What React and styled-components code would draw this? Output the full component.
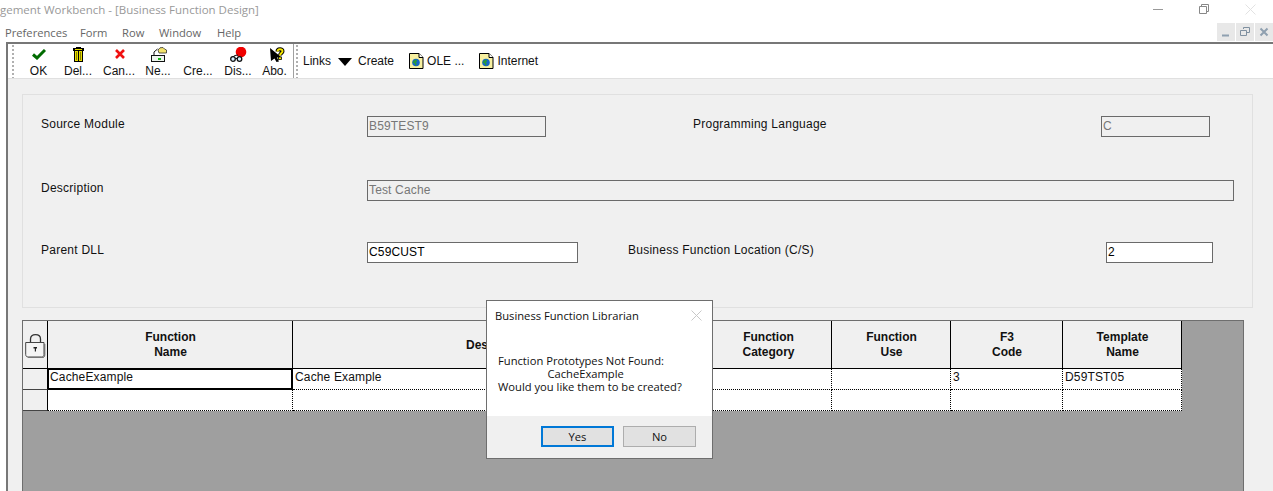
import React from 'react';
import styled, { createGlobalStyle } from 'styled-components';

const GlobalStyle = createGlobalStyle`
  html, body {
    margin: 0;
    padding: 0;
    background: #fff;
    overflow: hidden;
  }
`;

const Screen = styled.div`
  width: 1273px;
  height: 491px;
  overflow: hidden;
  display: flex;
  flex-direction: column;
  background: #fff;
  font-family: "Liberation Sans", Arial, sans-serif;
  font-size: 12px;
  color: #000;
`;

const TitleBar = styled.div`
  height: 22px;
  flex: none;
  display: flex;
  align-items: flex-start;
  font-family: "Open Sans", sans-serif;
  font-size: 11.5px;
  color: #999;
`;

const TitleText = styled.span`
  flex: 1;
  line-height: 20px;
  white-space: nowrap;
`;

const Caption = styled.div`
  width: 46px;
  height: 18px;
  display: flex;
  align-items: center;
  justify-content: center;
`;

const MenuBar = styled.div`
  height: 20px;
  flex: none;
  display: flex;
  align-items: center;
  padding-left: 5px;
  font-family: "Open Sans", sans-serif;
  font-size: 11.2px;
  color: #666;
`;

const MenuItem = styled.span`
  width: ${(p) => p.$w}px;
`;

const MdiButtons = styled.div`
  margin-left: auto;
  display: flex;
  gap: 1px;
`;

const MdiButton = styled.div`
  width: 18px;
  height: 18px;
  background: #e8e8e8;
  display: flex;
  align-items: center;
  justify-content: center;
`;

const Frame = styled.div`
  flex: 1;
  margin-left: 6px;
  border-left: 2px solid #777;
  border-top: 2px solid #777;
  background: #f0f0f0;
  display: flex;
  flex-direction: column;
  min-height: 0;
`;

const Toolbar = styled.div`
  height: 34px;
  flex: none;
  background: #fff;
  border-bottom: 1px solid #e0e0e0;
  display: flex;
  align-items: stretch;
`;

const Gripper = styled.div`
  width: 2px;
  margin: 1px ${(p) => p.$right || 0}px 0 ${(p) => p.$left}px;
  background-image: linear-gradient(#b0b0b0 50%, transparent 50%);
  background-size: 2px 4px;
`;

const ToolSeparator = styled.div`
  width: 1px;
  background: #a0a0a0;
`;

const ToolButton = styled.div`
  width: ${(p) => p.$w}px;
  height: 34px;
  flex: none;
  display: flex;
  flex-direction: column;
  align-items: center;
`;

const ToolIcon = styled.div`
  height: 21px;
  display: flex;
  align-items: center;
  margin-left: ${(p) => p.$shift || 1}px;
`;

const ToolLabel = styled.span`
  line-height: 14px;
  color: #111;
  white-space: nowrap;
`;

const LinksArea = styled.div`
  display: flex;
  align-items: center;
  color: #111;
  margin-left: 5px;
  white-space: nowrap;
`;

const LinkText = styled.span`
  margin: 0 ${(p) => p.$right || 0}px 0 ${(p) => p.$left || 0}px;
`;

const ArrowSvg = styled.svg`
  margin-top: 2px;
`;

const Content = styled.div`
  flex: 1;
  padding: 15px 0 0 14px;
  display: flex;
  flex-direction: column;
  min-height: 0;
`;

const Panel = styled.div`
  width: 1231px;
  height: 214px;
  flex: none;
  box-sizing: border-box;
  border: 1px solid #e0e0e0;
  padding: 21px 0 0 18px;
  display: flex;
  flex-direction: column;
`;

const FormRow = styled.div`
  display: grid;
  grid-template-columns: ${(p) => p.$cols};
  margin-top: ${(p) => p.$top || 0}px;
`;

const Label = styled.span`
  padding-top: 1px;
  line-height: 14px;
  letter-spacing: 0.25px;
  color: #111;
  white-space: nowrap;
`;

const Field = styled.div`
  height: 21px;
  box-sizing: border-box;
  border: 1px solid #6a6a6a;
  padding: 2px 0 0 1px;
  line-height: 15px;
  letter-spacing: 0.15px;
  background: ${(p) => (p.$disabled ? '#f0f0f0' : '#fff')};
  color: ${(p) => (p.$disabled ? '#777' : '#000')};
`;

const GridArea = styled.div`
  margin-top: 12px;
  width: 1222px;
  flex: 1;
  box-sizing: border-box;
  border: 1px solid #6e6e6e;
  border-bottom: 0;
  background: #9f9f9f;
  min-height: 0;
`;

const DataGrid = styled.div`
  display: grid;
  width: 1159px;
  grid-template-columns: 25px 245px 412px 127px 119px 112px 119px;
  grid-template-rows: 48px 21px 21px;
`;

const HeadCell = styled.div`
  background: #f0f0f0;
  border-right: 1px solid #000;
  border-bottom: 1px solid #000;
  display: flex;
  align-items: center;
  justify-content: center;
  text-align: center;
  font-weight: 700;
  line-height: 15px;
  color: #111;
  padding: 1px 0 0 1px;
  box-sizing: border-box;
`;

const LockSvg = styled.svg`
  margin-top: 1px;
  flex: none;
`;

const RowHead = styled.div`
  background: #f0f0f0;
  border-right: 1px solid #000;
  border-bottom: 1px solid #444;
  box-sizing: border-box;
`;

const Cell = styled.div`
  background: #fff;
  border-right: 1px dotted #000;
  border-bottom: 1px dotted #000;
  padding: 1px 0 0 2px;
  line-height: 15px;
  letter-spacing: 0.15px;
  box-sizing: border-box;
  white-space: nowrap;
  color: #111;
`;

const ActiveCell = styled(Cell)`
  border: 2px solid #000;
  border-top-width: 1px;
  border-left-width: 1px;
  padding: 0 0 0 1px;
`;

const Dialog = styled.div`
  position: absolute;
  left: 486px;
  top: 300px;
  width: 227px;
  height: 159px;
  box-sizing: border-box;
  border: 1px solid #6e6e6e;
  background: #fff;
  display: flex;
  flex-direction: column;
  font-family: "Open Sans", sans-serif;
  font-size: 11.2px;
  color: #111;
`;

const DialogHead = styled.div`
  height: 29px;
  flex: none;
  display: flex;
  align-items: center;
  justify-content: space-between;
  padding: 0 10px 0 8px;
`;

const DialogBody = styled.div`
  flex: 1;
  padding: 24px 0 0 11px;
  line-height: 13px;
  white-space: pre;
`;

const DialogFooter = styled.div`
  height: 42px;
  flex: none;
  background: #f0f0f0;
  display: flex;
  justify-content: flex-end;
  align-items: flex-start;
  gap: 9px;
  padding: 10px 16px 0 0;
  box-sizing: border-box;
`;

const DialogButton = styled.div`
  width: 73px;
  height: 21px;
  box-sizing: border-box;
  background: #e1e1e1;
  border: ${(p) => (p.$primary ? '2px solid #0078d7' : '1px solid #adadad')};
  display: flex;
  align-items: center;
  justify-content: center;
`;

const CheckIcon = () => (
  <svg width="14" height="11" viewBox="0 0 14 11">
    <path d="M1 5.5 L5 9 L13 1" fill="none" stroke="#006b00" strokeWidth="3" />
  </svg>
);

const TrashIcon = () => (
  <svg width="11" height="15" viewBox="0 0 11 15" shapeRendering="crispEdges">
    <rect x="3" y="0" width="5" height="1" fill="#000" />
    <rect x="0" y="1" width="11" height="3" fill="#000" />
    <rect x="1" y="4" width="9" height="11" fill="#000" />
    <rect x="2" y="4" width="3" height="10" fill="#e6dc00" />
    <rect x="6" y="4" width="3" height="10" fill="#e6dc00" />
    <rect x="3" y="5" width="1" height="8" fill="#8a8400" />
    <rect x="7" y="5" width="1" height="8" fill="#8a8400" />
    <rect x="2" y="2" width="7" height="1" fill="#e6dc00" />
  </svg>
);

const CrossIcon = () => (
  <svg width="10" height="10" viewBox="0 0 10 10">
    <path d="M1 1 L9 9 M9 1 L1 9" stroke="#f01010" strokeWidth="2.6" />
  </svg>
);

const NewIcon = () => (
  <svg width="16" height="15" viewBox="0 0 16 15">
    <path d="M7 3 L9 .8 L12 .5 L13.5 2 L15.5 3 V6 H8 Z" fill="#f3e36a" stroke="#333" strokeWidth=".8" />
    <path d="M3 8 V5 L6.5 2" fill="none" stroke="#111" strokeWidth="1" />
    <rect x=".5" y="8.5" width="13" height="6" fill="#eef6ee" stroke="#111" />
    <rect x="7" y="11" width="3" height="2" fill="#17b317" />
  </svg>
);

const GlassesIcon = () => (
  <svg width="17" height="15" viewBox="0 0 17 15">
    <circle cx="11" cy="5" r="5.3" fill="#f00000" />
    <path d="M7 7.5 L10 9 L10 11.5 L12 9.5 Z" fill="#f00000" />
    <path d="M1 11 L5 8.5 L8 8" fill="none" stroke="#111" strokeWidth="1" />
    <circle cx="3" cy="12" r="2.3" fill="#d8f0ff" stroke="#111" strokeWidth="1.3" />
    <circle cx="9.5" cy="12" r="2.3" fill="#d8f0ff" stroke="#111" strokeWidth="1.3" />
    <path d="M5.3 11.5 H7.2" stroke="#111" strokeWidth="1" />
  </svg>
);

const HelpCursorIcon = () => (
  <svg width="15" height="15" viewBox="0 0 15 15">
    <path d="M0 1 L11 10 L7 10.5 L9 14.5 L6.5 15 L4.5 11.5 L1 14 Z" fill="#000" />
    <path d="M7.5 4.5 C7.5 1.5 12.5 1.5 12.5 4.2 C12.5 6 10 6 10 8.5" fill="none" stroke="#000" strokeWidth="4" />
    <path d="M7.5 4.5 C7.5 1.5 12.5 1.5 12.5 4.2 C12.5 6 10 6 10 8.5" fill="none" stroke="#f6e800" strokeWidth="2" />
    <rect x="8.5" y="10" width="3" height="2.5" fill="#f6e800" stroke="#000" strokeWidth=".8" />
  </svg>
);

const DocGlobeIcon = () => (
  <svg width="15" height="16" viewBox="0 0 15 16">
    <path d="M.5 .5 H10 L14 4.5 V15.5 H.5 Z" fill="#f7f0a0" stroke="#000" />
    <path d="M10 .5 V4.5 H14" fill="#fff" stroke="#000" />
    <circle cx="7" cy="9.5" r="3.8" fill="#1565c8" />
    <path d="M4.5 8 L7 6.2 L8.2 8 L7 9.5 L7.8 11.2 L6.5 13 L5.6 10.5 L3.6 9.5 Z" fill="#2a9a3a" />
  </svg>
);

const ArrowIcon = () => (
  <ArrowSvg width="14" height="8" viewBox="0 0 14 8">
    <path d="M0 0 H14 L7 8 Z" fill="#000" />
  </ArrowSvg>
);

const LockIcon = () => (
  <LockSvg width="21" height="24" viewBox="0 0 21 24">
    <path d="M5.5 9 V5 C5.5 2 7.5 .7 10.5 .7 C13.5 .7 15.5 2 15.5 5 V9" fill="none" stroke="#333" strokeWidth="1.3" />
    <path d="M.7 8.5 H19 V20.5 C19 22 18 23 16.5 23 H3.2 C1.7 23 .7 22 .7 20.5 Z" fill="#f4f4f4" stroke="#444" strokeWidth="1" />
    <path d="M19.8 10 V21 C19.8 22.6 18.6 23.8 17 23.8 H3" fill="none" stroke="#666" strokeWidth="1" />
    <path d="M8.5 13 H12 V14.5 H11 V17.5 H9.8 V14.5 H8.5 Z" fill="#222" />
  </LockSvg>
);

const tools = [
  { label: 'OK', w: 39, icon: <CheckIcon /> },
  { label: 'Del...', w: 40, icon: <TrashIcon /> },
  { label: 'Can...', w: 42, icon: <CrossIcon /> },
  { label: 'Ne...', w: 36, icon: <NewIcon /> },
  { label: 'Cre...', w: 44, icon: null },
  { label: 'Dis...', w: 36, icon: <GlassesIcon /> },
  { label: 'Abo.', w: 37, icon: <HelpCursorIcon />, shift: 6 },
];

const columns = [
  ['Function', 'Name'],
  ['Description'],
  ['Function', 'Category'],
  ['Function', 'Use'],
  ['F3', 'Code'],
  ['Template', 'Name'],
];

const App = () => {
  return (
    <>
      <GlobalStyle />
      <Screen>
        <TitleBar>
          <TitleText>gement Workbench - [Business Function Design]</TitleText>
          <Caption>
            <svg width="10" height="10" viewBox="0 0 10 10"><path d="M0 5.5 H10" stroke="#999" /></svg>
          </Caption>
          <Caption>
            <svg width="10" height="10" viewBox="0 0 10 10">
              <path d="M2.5 2.5 V.5 H9.5 V7.5 H7.5 M.5 2.5 H7.5 V9.5 H.5 Z" fill="none" stroke="#888" />
            </svg>
          </Caption>
          <Caption>
            <svg width="11" height="11" viewBox="0 0 11 11"><path d="M.5 .5 L10.5 10.5 M10.5 .5 L.5 10.5" stroke="#e2e2e2" /></svg>
          </Caption>
        </TitleBar>
        <MenuBar>
          <MenuItem $w={75}>Preferences</MenuItem>
          <MenuItem $w={42}>Form</MenuItem>
          <MenuItem $w={37}>Row</MenuItem>
          <MenuItem $w={58}>Window</MenuItem>
          <MenuItem $w={40}>Help</MenuItem>
          <MdiButtons>
            <MdiButton>
              <svg width="10" height="10" viewBox="0 0 10 10"><path d="M1 8.5 H8" stroke="#8fa0b0" strokeWidth="2" /></svg>
            </MdiButton>
            <MdiButton>
              <svg width="10" height="10" viewBox="0 0 10 10">
                <path d="M3.5 2 V.5 H9.5 V5.5 H7 M.5 3.5 H6.5 V8.5 H.5 Z" fill="none" stroke="#7f90a0" />
              </svg>
            </MdiButton>
            <MdiButton>
              <svg width="10" height="10" viewBox="0 0 10 10"><path d="M1.5 1.5 L8.5 8.5 M8.5 1.5 L1.5 8.5" stroke="#8fa0b0" strokeWidth="2" /></svg>
            </MdiButton>
          </MdiButtons>
        </MenuBar>
        <Frame>
          <Toolbar>
            <Gripper $left={4} $right={5} />
            {tools.map((t) => (
              <ToolButton key={t.label} $w={t.w}>
                <ToolIcon $shift={t.shift}>{t.icon}</ToolIcon>
                <ToolLabel>{t.label}</ToolLabel>
              </ToolButton>
            ))}
            <ToolSeparator />
            <Gripper $left={2} />
            <LinksArea>
              <LinkText $right={7}>Links</LinkText>
              <ArrowIcon />
              <LinkText $left={6} $right={15}>Create</LinkText>
              <DocGlobeIcon />
              <LinkText $left={3} $right={15}>OLE ...</LinkText>
              <DocGlobeIcon />
              <LinkText $left={3}>Internet</LinkText>
            </LinksArea>
          </Toolbar>
          <Content>
            <Panel>
              <FormRow $cols="326px 179px 147px 408px 109px">
                <Label>Source Module</Label>
                <Field $disabled>B59TEST9</Field>
                <span />
                <Label>Programming Language</Label>
                <Field $disabled>C</Field>
              </FormRow>
              <FormRow $top={43} $cols="326px 867px">
                <Label>Description</Label>
                <Field $disabled>Test Cache</Field>
              </FormRow>
              <FormRow $top={41} $cols="326px 211px 50px 478px 107px">
                <Label>Parent DLL</Label>
                <Field>C59CUST</Field>
                <span />
                <Label>Business Function Location (C/S)</Label>
                <Field>2</Field>
              </FormRow>
            </Panel>
            <GridArea>
              <DataGrid>
                <HeadCell><LockIcon /></HeadCell>
                {columns.map((c) => (
                  <HeadCell key={c.join()}>
                    <div>{c.map((line) => <div key={line}>{line}</div>)}</div>
                  </HeadCell>
                ))}
                <RowHead />
                <ActiveCell>CacheExample</ActiveCell>
                <Cell>Cache Example</Cell>
                <Cell />
                <Cell />
                <Cell>3</Cell>
                <Cell>D59TST05</Cell>
                <RowHead />
                <Cell />
                <Cell />
                <Cell />
                <Cell />
                <Cell />
                <Cell />
              </DataGrid>
            </GridArea>
          </Content>
        </Frame>
      </Screen>
      <Dialog>
        <DialogHead>
          <span>Business Function Librarian</span>
          <svg width="11" height="11" viewBox="0 0 11 11"><path d="M.5 .5 L10.5 10.5 M10.5 .5 L.5 10.5" stroke="#c8c8c8" /></svg>
        </DialogHead>
        <DialogBody>{'Function Prototypes Not Found:\n                 CacheExample\nWould you like them to be created?'}</DialogBody>
        <DialogFooter>
          <DialogButton $primary>Yes</DialogButton>
          <DialogButton>No</DialogButton>
        </DialogFooter>
      </Dialog>
    </>
  );
};

export default App;
